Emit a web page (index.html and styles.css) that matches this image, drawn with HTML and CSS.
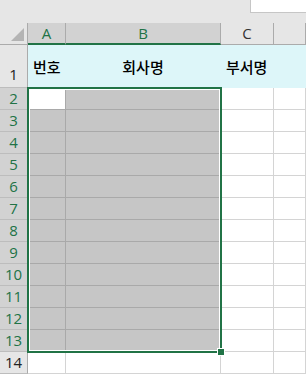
FILE: index.html
```html
<!DOCTYPE html>
<html lang="ko">
<head>
    <meta charset="UTF-8">
    <meta name="viewport" content="width=device-width, initial-scale=1.0">
    <title>시트1</title>
    <link rel="stylesheet" href="styles.css">
</head>
<body>

    <div class="toolbar">
        <div class="name-box"></div>
    </div>

    <div class="sheet">
        <!-- column headers -->
        <div class="corner"><span class="corner-mark"></span></div>
        <div class="col-head on">A</div>
        <div class="col-head on">B</div>
        <div class="col-head">C</div>
        <div class="col-head"></div>

        <!-- header row -->
        <div class="row-head tall">1</div>
        <div class="cell title">번호</div>
        <div class="cell title center">회사명</div>
        <div class="cell title">부서명</div>
        <div class="cell title"></div>

        <div class="row-head on">2</div>
        <div class="cell sel active"></div><div class="cell sel"></div><div class="cell"></div><div class="cell"></div>
        <div class="row-head on">3</div>
        <div class="cell sel"></div><div class="cell sel"></div><div class="cell"></div><div class="cell"></div>
        <div class="row-head on">4</div>
        <div class="cell sel"></div><div class="cell sel"></div><div class="cell"></div><div class="cell"></div>
        <div class="row-head on">5</div>
        <div class="cell sel"></div><div class="cell sel"></div><div class="cell"></div><div class="cell"></div>
        <div class="row-head on">6</div>
        <div class="cell sel"></div><div class="cell sel"></div><div class="cell"></div><div class="cell"></div>
        <div class="row-head on">7</div>
        <div class="cell sel"></div><div class="cell sel"></div><div class="cell"></div><div class="cell"></div>
        <div class="row-head on">8</div>
        <div class="cell sel"></div><div class="cell sel"></div><div class="cell"></div><div class="cell"></div>
        <div class="row-head on">9</div>
        <div class="cell sel"></div><div class="cell sel"></div><div class="cell"></div><div class="cell"></div>
        <div class="row-head on">10</div>
        <div class="cell sel"></div><div class="cell sel"></div><div class="cell"></div><div class="cell"></div>
        <div class="row-head on">11</div>
        <div class="cell sel"></div><div class="cell sel"></div><div class="cell"></div><div class="cell"></div>
        <div class="row-head on">12</div>
        <div class="cell sel"></div><div class="cell sel"></div><div class="cell"></div><div class="cell"></div>
        <div class="row-head on">13</div>
        <div class="cell sel"></div><div class="cell sel"></div><div class="cell"></div><div class="cell"></div>
        <div class="row-head">14</div>
        <div class="cell"></div><div class="cell"></div><div class="cell"></div><div class="cell"></div>

        <!-- selected range A2:B13 -->
        <div class="selection"><span class="fill-handle"></span></div>
    </div>

</body>
</html>
```

FILE: styles.css
```css
body {
    margin: 0;
    background: #e6e6e6;
    font-family: "Open Sans", "Noto Sans", sans-serif;
    overflow: hidden;
}
.toolbar {
    height: 23px;
}
.name-box {
    margin-left: 250px;
    height: 12px;
    background: #fff;
    border-left: 1px solid #c6c6c6;
    border-bottom: 1px solid #c6c6c6;
}
.sheet {
    position: relative;
    display: grid;
    grid-template-columns: 28px 38px 155px 53px 1fr;
    grid-template-rows: 22px 43px repeat(13, 22px);
    background: #fff;
}
.sheet > div {
    box-sizing: border-box;
}
.corner {
    background: #e6e6e6;
    border-right: 1px solid #ababab;
    border-bottom: 1px solid #ababab;
    position: relative;
}
.corner-mark {
    position: absolute;
    right: 3px;
    bottom: 3px;
    width: 13px;
    height: 13px;
    background: #b4b4b4;
    clip-path: polygon(100% 0, 100% 100%, 0 100%);
}
.col-head {
    background: #e6e6e6;
    border-right: 1px solid #ababab;
    border-bottom: 1px solid #ababab;
    color: #333;
    font-size: 15px;
    text-align: center;
    line-height: 21px;
}
.col-head.on {
    background: #d2d2d2;
    color: #217346;
    border-bottom: 2px solid #217346;
}
.row-head {
    background: #e6e6e6;
    border-right: 1px solid #ababab;
    border-bottom: 1px solid #bdbdbd;
    color: #222;
    font-size: 15px;
    text-align: center;
    line-height: 21px;
}
.row-head.tall {
    display: flex;
    align-items: flex-end;
    justify-content: center;
    padding-bottom: 2px;
}
.row-head.on {
    background: #d2d2d2;
    color: #217346;
}
.cell {
    border-right: 1px solid #d4d4d4;
    border-bottom: 1px solid #d4d4d4;
}
.cell.title {
    background: #ddf6f9;
    border-color: #ddf6f9;
    font-family: "Noto Sans CJK KR", sans-serif;
    font-weight: 500;
    font-size: 15px;
    color: #000;
    display: flex;
    align-items: center;
    padding-left: 5px;
}
.cell.center {
    justify-content: center;
    padding-left: 0;
}
.cell.sel {
    background: #c6c6c6;
    border-color: #a9a9a9;
}
.cell.sel.active {
    background: #fff;
}
/* green range outline, sits over the cells */
.selection {
    position: absolute;
    left: 27px;
    top: 64px;
    width: 195px;
    height: 266px;
    box-sizing: border-box;
    border: 2px solid #217346;
    box-shadow: inset 0 0 0 1px #fff;
}
.fill-handle {
    position: absolute;
    right: -5px;
    bottom: -5px;
    width: 6px;
    height: 6px;
    background: #217346;
    border: 1px solid #fff;
}
```
